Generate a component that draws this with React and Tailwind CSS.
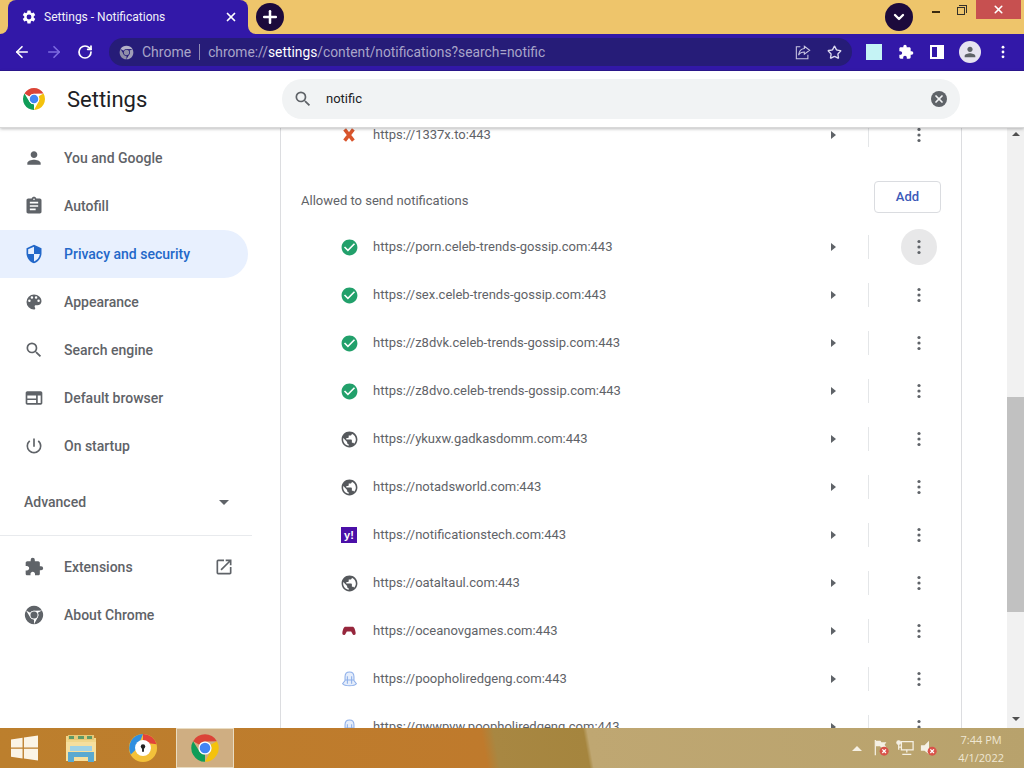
import React from "react";
import {
  ArrowLeft,
  ArrowRight,
  ChevronDown,
  Plus,
  RotateCw,
  Star,
  X,
} from "lucide-react";

// material icons, 24 viewbox
const ICONS = {
  person:
    "M12 12c2.21 0 4-1.79 4-4s-1.79-4-4-4-4 1.79-4 4 1.79 4 4 4zm0 2c-2.67 0-8 1.34-8 4v2h16v-2c0-2.66-5.33-4-8-4z",
  assignment:
    "M19 3h-4.18C14.4 1.84 13.3 1 12 1s-2.4.84-2.82 2H5c-1.1 0-2 .9-2 2v14c0 1.1.9 2 2 2h14c1.1 0 2-.9 2-2V5c0-1.1-.9-2-2-2zm-7 0c.55 0 1 .45 1 1s-.45 1-1 1-1-.45-1-1 .45-1 1-1zm2 14H7v-2h7v2zm3-4H7v-2h10v2zm0-4H7V7h10v2z",
  shield:
    "M12 1 3 5v6c0 5.55 3.84 10.74 9 12 5.16-1.26 9-6.45 9-12V5l-9-4zm0 10.99h7c-.53 4.12-3.28 7.79-7 8.94V12H5V6.3l7-3.11v8.8z",
  palette:
    "M12 3a9 9 0 0 0 0 18c.83 0 1.5-.67 1.5-1.5 0-.39-.15-.74-.39-1.01-.23-.26-.38-.61-.38-.99 0-.83.67-1.5 1.5-1.5H16c2.76 0 5-2.24 5-5 0-4.42-4.03-8-9-8zm-5.5 9a1.5 1.5 0 1 1 0-3 1.5 1.5 0 0 1 0 3zm3-4a1.5 1.5 0 1 1 0-3 1.5 1.5 0 0 1 0 3zm5 0a1.5 1.5 0 1 1 0-3 1.5 1.5 0 0 1 0 3zm3 4a1.5 1.5 0 1 1 0-3 1.5 1.5 0 0 1 0 3z",
  search:
    "M15.5 14h-.79l-.28-.27A6.471 6.471 0 0 0 16 9.5 6.5 6.5 0 1 0 9.5 16c1.61 0 3.09-.59 4.23-1.57l.27.28v.79l5 4.99L20.49 19l-4.99-5zm-6 0C7.01 14 5 11.99 5 9.5S7.01 5 9.5 5 14 7.01 14 9.5 11.99 14 9.5 14z",
  browser:
    "M20 4H4c-1.1 0-2 .9-2 2v12c0 1.1.9 2 2 2h16c1.1 0 2-.9 2-2V6c0-1.1-.9-2-2-2zM4 9h10.5v3.5H4V9zm0 5.5h10.5V18H4v-3.5zM20 18h-3.5V9H20v9z",
  power:
    "M13 3h-2v10h2V3zm4.83 2.17-1.42 1.42A6.92 6.92 0 0 1 19 12c0 3.87-3.13 7-7 7s-7-3.13-7-7c0-2.14.96-4.05 2.58-5.42L6.17 5.17A8.932 8.932 0 0 0 3 12a9 9 0 0 0 18 0c0-2.74-1.23-5.18-3.17-6.83z",
  extension:
    "M20.5 11H19V7c0-1.1-.9-2-2-2h-4V3.5a2.5 2.5 0 0 0-5 0V5H4c-1.1 0-1.99.9-1.99 2v3.8H3.5c1.49 0 2.7 1.21 2.7 2.7s-1.21 2.7-2.7 2.7H2V20c0 1.1.9 2 2 2h3.8v-1.5c0-1.49 1.21-2.7 2.7-2.7s2.7 1.21 2.7 2.7V22H17c1.1 0 2-.9 2-2v-4h1.5a2.5 2.5 0 0 0 0-5z",
  launch:
    "M19 19H5V5h7V3H5a2 2 0 0 0-2 2v14a2 2 0 0 0 2 2h14c1.1 0 2-.9 2-2v-7h-2v7zM14 3v2h3.59l-9.83 9.83 1.41 1.41L19 6.41V10h2V3h-7z",
  globe:
    "M12 2C6.48 2 2 6.48 2 12s4.48 10 10 10 10-4.48 10-10S17.52 2 12 2zm-1 17.93c-3.95-.49-7-3.85-7-7.93 0-.62.08-1.21.21-1.79L9 15v1c0 1.1.9 2 2 2v1.93zm6.9-2.54c-.26-.81-1-1.39-1.9-1.39h-1v-3c0-.55-.45-1-1-1H8v-2h2c.55 0 1-.45 1-1V7h2c1.1 0 2-.9 2-2v-.41c2.93 1.19 5 4.06 5 7.41 0 2.08-.8 3.97-2.1 5.39z",
  gear:
    "M19.14 12.94c.04-.3.06-.61.06-.94 0-.32-.02-.64-.07-.94l2.03-1.58a.49.49 0 0 0 .12-.61l-1.92-3.32a.488.488 0 0 0-.59-.22l-2.39.96c-.5-.38-1.03-.7-1.62-.94l-.36-2.54a.484.484 0 0 0-.48-.41h-3.84c-.24 0-.43.17-.47.41l-.36 2.54c-.59.24-1.13.57-1.62.94l-2.39-.96c-.22-.08-.47 0-.59.22L2.74 8.87c-.12.21-.08.47.12.61l2.03 1.58c-.05.3-.09.63-.09.94s.02.64.07.94l-2.03 1.58a.49.49 0 0 0-.12.61l1.92 3.32c.12.22.37.29.59.22l2.39-.96c.5.38 1.03.7 1.62.94l.36 2.54c.05.24.24.41.48.41h3.84c.24 0 .44-.17.47-.41l.36-2.54c.59-.24 1.13-.56 1.62-.94l2.39.96c.22.08.47 0 .59-.22l1.92-3.32c.12-.22.07-.47-.12-.61l-2.01-1.58zM12 15.6A3.6 3.6 0 1 1 12 8.4a3.6 3.6 0 0 1 0 7.2z",
  checkCircle:
    "M12 2C6.48 2 2 6.48 2 12s4.48 10 10 10 10-4.48 10-10S17.52 2 12 2zm-2 15-5-5 1.41-1.41L10 14.17l7.59-7.59L19 8l-9 9z",
};

const MatIcon = ({ name, className }) => (
  <svg viewBox="0 0 24 24" className={className} fill="currentColor">
    <path d={ICONS[name]} />
  </svg>
);

const Kebab = ({ className }) => (
  <svg viewBox="0 0 4 16" className={className} fill="currentColor">
    <circle cx="2" cy="2.5" r="1.6" />
    <circle cx="2" cy="8" r="1.6" />
    <circle cx="2" cy="13.5" r="1.6" />
  </svg>
);

const ChromeLogo = ({
  className,
  red = "#db4437",
  yellow = "#f4c20d",
  green = "#0f9d58",
  blue = "#4285f4",
  ring = "#ffffff",
}) => {
  const sector = "M4.95 13A22 22 0 0 1 43.05 13L24 13.5A10.5 10.5 0 0 0 14.9 18.75Z";
  return (
    <svg viewBox="0 0 48 48" className={className}>
      <path d={sector} fill={red} />
      <path d={sector} fill={yellow} transform="rotate(120 24 24)" />
      <path d={sector} fill={green} transform="rotate(240 24 24)" />
      <circle cx="24" cy="24" r="10.5" fill={ring} />
      <circle cx="24" cy="24" r="8.5" fill={blue} />
    </svg>
  );
};

const WinLogo = () => (
  <svg viewBox="0 0 28 26" className="h-[26px] w-[27px]" fill="#fbf4e6">
    <path d="M0 4.2 12 2.4V12.4H0Z" />
    <path d="M13.4 2.2 28 0V12.4H13.4Z" />
    <path d="M0 13.8H12V23.8L0 22Z" />
    <path d="M13.4 13.8H28V26L13.4 24Z" />
  </svg>
);

const FolderIcon = () => (
  <svg viewBox="0 0 32 30" className="h-[30px] w-[32px]">
    <path d="M1 3h10l2 2h18v23H1Z" fill="#f1d68a" />
    <path d="M3 2h26v5H3Z" fill="#e6c878" />
    <path d="M4 3h5v3H4ZM13 3h6v3h-6ZM22 3h5v3h-5Z" fill="#5f9a66" />
    <path d="M1 9h30v19H1Z" fill="#f6df9e" />
    <path d="M5 13h22v5H5Z" fill="#9fd2e6" />
    <path d="M3 19h26v10h-6v-5H9v5H3Z" fill="#5aa9d0" />
  </svg>
);

const SecureBrowser = () => (
  <svg viewBox="0 0 32 32" className="h-[30px] w-[30px]">
    <circle cx="16" cy="16" r="15" fill="#f3c13a" />
    <path d="M16 1A15 15 0 0 1 30.5 12L16 10Z" fill="#e2433a" />
    <path d="M16 1A15 15 0 0 0 3 23L10 16Z" fill="#2f8fe0" />
    <circle cx="16" cy="16" r="8.5" fill="#fff" />
    <circle cx="16" cy="14.5" r="2.4" fill="#222" />
    <path d="M15 15h2v5h-2Z" fill="#222" />
  </svg>
);

const FlagTray = () => (
  <svg viewBox="0 0 20 20" className="h-[18px] w-[18px]">
    <path d="M3 1h1.4v17H3Z" fill="#f5f0e4" />
    <path d="M4.4 2h5l1 1.5H16l-2 3 2 3H10l-1-1.5H4.4Z" fill="#f5f0e4" />
    <circle cx="13.5" cy="13.5" r="5" fill="#d9534a" />
    <path d="m11.5 11.5 4 4m0-4-4 4" stroke="#fff" strokeWidth="1.4" />
  </svg>
);

const NetworkTray = () => (
  <svg viewBox="0 0 20 20" className="h-[18px] w-[18px]" fill="none" stroke="#f5f0e4" strokeWidth="1.4">
    <path d="M6 3h13v9H6Z" />
    <circle cx="3" cy="4" r="2" fill="#f5f0e4" />
    <path d="M3 6v6M12 12v3M7 17h10M3 9h3" />
  </svg>
);

const SoundTray = () => (
  <svg viewBox="0 0 20 20" className="h-[18px] w-[18px]">
    <path d="M1 7h4l5-5v15l-5-4H1Z" fill="#f5f0e4" />
    <circle cx="13.5" cy="13.5" r="5" fill="#d9534a" />
    <path d="m11.5 11.5 4 4m0-4-4 4" stroke="#fff" strokeWidth="1.4" />
  </svg>
);

const navItems = [
  { label: "You and Google", icon: "person" },
  { label: "Autofill", icon: "assignment" },
  { label: "Privacy and security", icon: "shield", active: true },
  { label: "Appearance", icon: "palette" },
  { label: "Search engine", icon: "search" },
  { label: "Default browser", icon: "browser" },
  { label: "On startup", icon: "power" },
];

const Favicon = ({ type }) => {
  if (type === "check") {
    return <MatIcon name="checkCircle" className="h-[19px] w-[19px] shrink-0 text-[#22a06b]" />;
  }
  if (type === "globe") {
    return <MatIcon name="globe" className="h-[19px] w-[19px] shrink-0 text-[#55585c]" />;
  }
  if (type === "x") {
    return (
      <svg viewBox="0 0 16 16" className="h-[14px] w-[14px]" fill="none" stroke="#d9552c" strokeWidth="4">
        <path d="m3 1.500 10 13M13 1.500 3 14.500" />
      </svg>
    );
  }
  if (type === "yahoo") {
    return (
      <div className="flex h-4 w-4 items-center justify-center bg-[#4b10a8] font-['Liberation_Sans',sans-serif] text-[11px] font-bold leading-none text-white">
        y!
      </div>
    );
  }
  if (type === "game") {
    return (
      <svg viewBox="0 0 16 12" className="h-3 w-[14px]" fill="#96263c">
        <path d="M4 1h8c2 0 3 3 3.600 7 .3 2.600-2 3.400-3.400 1.600L10.500 6.500h-5L3.800 9.600C2.400 11.400.1 10.600.4 8 1 4 2 1 4 1Z" />
      </svg>
    );
  }
  return (
    <svg viewBox="0 0 16 16" className="h-[17px] w-[17px] shrink-0" fill="none" stroke="#8fb0ea" strokeWidth="1">
      <path d="M8 1c-2.800 0-4.200 2-4.200 4.500v3.500L1.500 12c2 2.500 11 2.500 13 0L12.200 9V5.500C12.200 3 10.800 1 8 1Z" fill="#e6eefb" />
      <path d="M6 5v7M10 5v7M4 8.500h8" />
    </svg>
  );
};

const Row = ({ url, icon, hovered }) => (
  <div className="flex h-12 items-center">
    <div className="ml-[60px] flex w-4 shrink-0 justify-center">
      <Favicon type={icon} />
    </div>
    <span className="ml-4 grow text-[13px] text-[#5f6368]">{url}</span>
    <div className="h-0 w-0 border-y-[4px] border-l-[5px] border-y-transparent border-l-[#5f6368]" />
    <div className="ml-[32px] h-6 w-px bg-[#e4e6e8]" />
    <div
      className={`ml-[32px] mr-[24px] flex h-9 w-9 items-center justify-center rounded-full ${
        hovered ? "bg-[#e8e8e9]" : ""
      }`}
    >
      <Kebab className="h-4 w-1 text-[#5f6368]" />
    </div>
  </div>
);

const allowedSites = [
  { url: "https://porn.celeb-trends-gossip.com:443", icon: "check", hovered: true },
  { url: "https://sex.celeb-trends-gossip.com:443", icon: "check" },
  { url: "https://z8dvk.celeb-trends-gossip.com:443", icon: "check" },
  { url: "https://z8dvo.celeb-trends-gossip.com:443", icon: "check" },
  { url: "https://ykuxw.gadkasdomm.com:443", icon: "globe" },
  { url: "https://notadsworld.com:443", icon: "globe" },
  { url: "https://notificationstech.com:443", icon: "yahoo" },
  { url: "https://oataltaul.com:443", icon: "globe" },
  { url: "https://oceanovgames.com:443", icon: "game" },
  { url: "https://poopholiredgeng.com:443", icon: "bell" },
  { url: "https://qwwpyw.poopholiredgeng.com:443", icon: "bell" },
];

const App = () => {
  return (
    <div className="flex h-[768px] w-[1024px] flex-col overflow-hidden bg-white font-['Roboto',sans-serif]">
      {/* title bar */}
      <div className="flex h-[34px] shrink-0 bg-[#eec56b]">
        <div className="relative ml-2 flex h-[34px] w-[240px] items-center rounded-t-lg bg-[#3218a8] pl-[13px] pr-[10px]">
          <div className="absolute -left-2 bottom-0 h-2 w-2 bg-[#3218a8]">
            <div className="h-full w-full rounded-br-lg bg-[#eec56b]" />
          </div>
          <div className="absolute -right-2 bottom-0 h-2 w-2 bg-[#3218a8]">
            <div className="h-full w-full rounded-bl-lg bg-[#eec56b]" />
          </div>
          <MatIcon name="gear" className="h-4 w-4 text-white" />
          <span className="ml-[7px] grow text-xs text-[#f1f1f8]">Settings - Notifications</span>
          <X className="h-[14px] w-[14px] text-white" strokeWidth={3} />
        </div>
        <div className="ml-2 mt-[3px] flex h-7 w-7 items-center justify-center rounded-full bg-[#1c0a3c]">
          <Plus className="h-5 w-5 text-white" strokeWidth={3} />
        </div>
        <div className="grow" />
        <div className="mr-[19px] mt-[3px] flex h-7 w-7 items-center justify-center rounded-full bg-[#1c0a3c]">
          <ChevronDown className="h-4 w-4 text-white" strokeWidth={3.5} />
        </div>
        <div className="mt-[11px] h-[2px] w-2 bg-[#3a2a10]" />
        <div className="relative ml-[17px] mt-[5px] h-[10px] w-[10px]">
          <div className="absolute bottom-0 left-0 h-2 w-2 border border-[#33302a] bg-[#eec56b]" />
          <div className="absolute right-0 top-0 h-2 w-2 border-r border-t border-[#33302a]" />
        </div>
        <div className="ml-[9px] mr-[3px] flex h-[19px] w-[45px] items-center justify-center bg-[#c75050]">
          <X className="h-[13px] w-[13px] text-white" strokeWidth={3} />
        </div>
      </div>

      {/* toolbar */}
      <div className="flex h-[37px] shrink-0 items-center border-b border-[#2a1590] bg-[#3218a8]">
        <div className="flex w-[109px] shrink-0 items-center pl-[13px]">
          <ArrowLeft className="h-[18px] w-[18px] text-white" strokeWidth={2.2} />
          <ArrowRight className="ml-[14px] h-[18px] w-[18px] text-[#7d6be0]" strokeWidth={2.2} />
          <RotateCw className="ml-[14px] h-4 w-4 text-white" strokeWidth={2.6} />
        </div>
        <div className="flex h-7 w-[743px] items-center rounded-full bg-[#261c78] pl-[10px] pr-[10px]">
          <ChromeLogo
            className="h-[15px] w-[15px]"
            red="#b4b2c8"
            yellow="#a09eb8"
            green="#8f8da8"
            blue="#8f8da8"
            ring="#261c78"
          />
          <span className="ml-[8px] text-sm text-[#a9a5c9]">Chrome</span>
          <div className="ml-2 h-4 w-px bg-[#8f8bb5]" />
          <span className="ml-[8px] grow text-[13.8px] text-[#a9a5c9]">
            chrome://<span className="text-white">settings</span>/content/notifications?search=notific
          </span>
          <svg viewBox="0 0 18 18" className="h-4 w-4" fill="none" stroke="#c9c6e2" strokeWidth="1.2">
            <path d="M10.500 2.500 16.500 7l-6 4.500V9C7.500 9 5.500 10 4 12.500 4.500 8.500 6.500 5.500 10.500 5Z" />
            <path d="M6 3H1.500v13.500h13V12" />
          </svg>
          <Star className="ml-[16px] h-[15px] w-[15px] text-[#dcdaf0]" strokeWidth={2.2} />
        </div>
        <div className="ml-[14px] h-4 w-4 bg-[#c5f3f5]" />
        <MatIcon name="extension" className="ml-[16px] h-4 w-4 text-white" />
        <div className="ml-[16px] flex h-[14px] w-[14px] justify-end border-2 border-white">
          <div className="h-full w-[5px] bg-white" />
        </div>
        <div className="ml-[15px] flex h-[22px] w-[22px] items-center justify-center rounded-full bg-[#e6e3f0]">
          <MatIcon name="person" className="h-4 w-4 text-[#5f6368]" />
        </div>
        <Kebab className="ml-[20px] h-[14px] w-1 text-white" />
      </div>

      {/* settings header */}
      <div className="z-10 flex h-[57px] shrink-0 items-center border-b border-[#d8d8d8] bg-white shadow-[0_1px_3px_rgba(60,64,67,0.35)]">
        <div className="flex w-[282px] shrink-0 items-center pl-[22px]">
          <ChromeLogo className="h-6 w-6" />
          <span className="ml-[21px] text-[22px] text-[#202124]">Settings</span>
        </div>
        <div className="flex h-10 w-[678px] items-center rounded-full bg-[#f1f3f4] pl-[11px] pr-[13px]">
          <MatIcon name="search" className="h-5 w-5 text-[#5f6368]" />
          <span className="ml-[13px] grow text-[13px] text-[#202124]">notific</span>
          <div className="flex h-4 w-4 items-center justify-center rounded-full bg-[#5f6368]">
            <X className="h-3 w-3 text-[#f1f3f4]" strokeWidth={3.5} />
          </div>
        </div>
      </div>

      <div className="flex min-h-0 grow">
        {/* sidebar */}
        <div className="w-[280px] shrink-0 pt-[6px]">
          <div className="w-[248px]">
            {navItems.map((item) => (
              <div
                key={item.label}
                className={`flex h-12 items-center rounded-r-full pl-6 text-sm font-medium ${
                  item.active ? "bg-[#e8f0fe] text-[#2368c9]" : "text-[#5f6368]"
                }`}
              >
                <MatIcon name={item.icon} className="h-5 w-5" />
                <span className="ml-5">{item.label}</span>
              </div>
            ))}
            <div className="flex h-[64px] items-center justify-between pl-6 pr-[19px] text-sm font-medium text-[#5f6368]">
              <span>Advanced</span>
              <div className="h-0 w-0 border-x-[5px] border-t-[5px] border-x-transparent border-t-[#5f6368]" />
            </div>
          </div>
          <div className="mt-[1px] w-[252px] border-t border-[#e8eaed] pt-[7px]">
            <div className="flex h-12 items-center pl-6 text-sm font-medium text-[#5f6368]">
              <MatIcon name="extension" className="h-5 w-5" />
              <span className="ml-5 grow">Extensions</span>
              <MatIcon name="launch" className="mr-[18px] h-5 w-5" />
            </div>
            <div className="flex h-12 items-center pl-6 text-sm font-medium text-[#5f6368]">
              <ChromeLogo
                className="h-5 w-5"
                red="#5f6368"
                yellow="#5f6368"
                green="#5f6368"
                blue="#5f6368"
                ring="#ffffff"
              />
              <span className="ml-5">About Chrome</span>
            </div>
          </div>
        </div>

        {/* card */}
        <div className="w-[682px] shrink-0 overflow-hidden border-x border-[#dcdde0]">
          <div className="-mt-[17px]">
            <Row url="https://1337x.to:443" icon="x" />
          </div>
          <div className="flex h-[64px] items-end justify-between pb-[10px] pl-5 pr-5">
            <span className="mb-[3px] text-[13px] text-[#5f6368]">Allowed to send notifications</span>
            <button className="h-8 w-[67px] rounded border border-[#dadce0] text-[13px] font-medium text-[#3c5ab8]">
              Add
            </button>
          </div>
          {allowedSites.map((site) => (
            <Row key={site.url} {...site} />
          ))}
        </div>

        <div className="grow" />

        {/* scrollbar */}
        <div className="flex w-[17px] shrink-0 flex-col items-center bg-[#f1f1f1]">
          <div className="mt-[4px] h-0 w-0 border-x-[4px] border-b-[4px] border-x-transparent border-b-[#505050]" />
          <div className="mt-[261px] h-[215px] w-full bg-[#c1c1c1]" />
          <div className="grow" />
          <div className="mb-[7px] h-0 w-0 border-x-[4px] border-t-[4px] border-x-transparent border-t-[#505050]" />
        </div>
      </div>

      {/* taskbar */}
      <div className="flex h-10 shrink-0 items-center bg-[linear-gradient(80deg,#bc7f2d_0%,#bf7a2c_47.3%,#a88742_48.5%,#a5853e_57.2%,#bfa772_57.6%,#b8a26c_100%)]">
        <div className="ml-[11px]">
          <WinLogo />
        </div>
        <div className="ml-[27px]">
          <FolderIcon />
        </div>
        <div className="ml-[31px]">
          <SecureBrowser />
        </div>
        <div className="ml-[18px] flex h-10 w-[58px] items-center justify-center border border-[#e9dcc2] bg-[#cfae82]">
          <ChromeLogo className="h-[30px] w-[30px]" />
        </div>
        <div className="grow" />
        <div className="h-0 w-0 border-x-[5px] border-b-[5px] border-x-transparent border-b-[#f5f0e4]" />
        <div className="ml-[10px] flex gap-[6px]">
          <FlagTray />
          <NetworkTray />
          <SoundTray />
        </div>
        <div className="ml-[20px] mr-[20px] flex flex-col items-center pt-[2px] font-['Open_Sans',sans-serif] text-[11px] leading-[18px] text-[#efe7d3]">
          <span>7:44 PM</span>
          <span>4/1/2022</span>
        </div>
      </div>
    </div>
  );
};

export default App;
